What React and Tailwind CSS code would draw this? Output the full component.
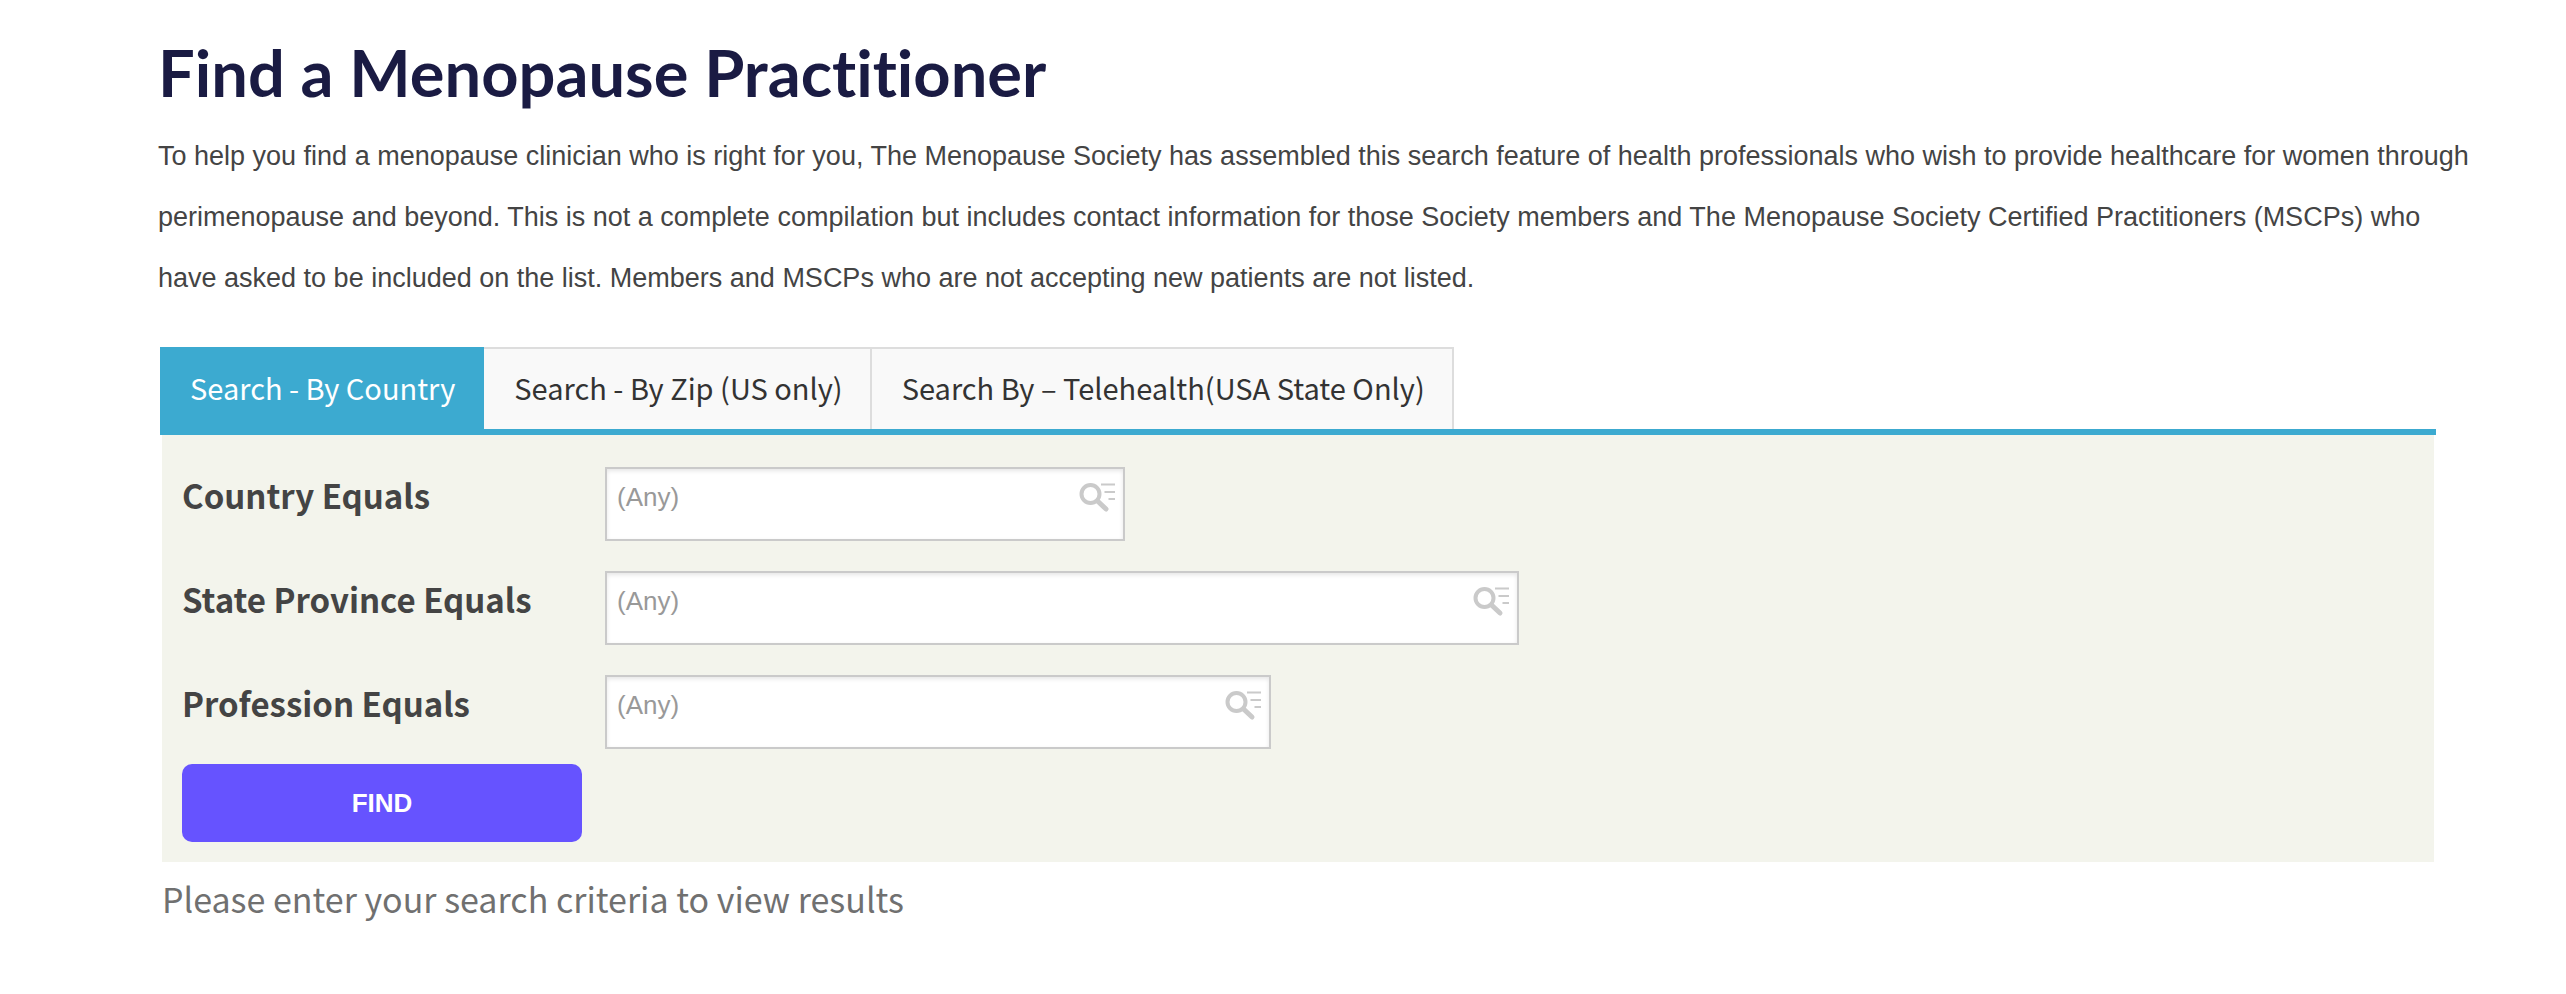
import React, { useState } from "react";

const tabs = [
  { id: "country", label: "Search - By Country" },
  { id: "zip", label: "Search - By Zip (US only)" },
  { id: "telehealth", label: "Search By – Telehealth(USA State Only)" },
];

const fields = [
  { id: "country-name", label: "Country Equals", width: "w-[520px]" },
  { id: "state-province", label: "State Province Equals", width: "w-[914px]" },
  { id: "profession", label: "Profession Equals", width: "w-[666px]" },
];

function LookupIcon() {
  return (
    <svg width="36" height="30" viewBox="0 0 36 30" fill="none" stroke="#cacaca">
      <circle cx="11.5" cy="11" r="9" strokeWidth="4" />
      <path d="M18.5 18 L27 26" strokeWidth="5" strokeLinecap="round" />
      <path d="M22 1.5 H36 M25.5 9 H36 M29.5 16 H36" strokeWidth="2" />
    </svg>
  );
}

function LookupField({ id, label, width }) {
  return (
    <div className="flex h-[104px] items-start">
      <label
        htmlFor={id}
        className="w-[423px] shrink-0 pt-1 text-[33px] leading-[48px] font-bold text-[#444]"
      >
        {label}
      </label>
      <div className={`relative ${width}`}>
        <input
          id={id}
          type="text"
          placeholder="(Any)"
          className="block h-[74px] w-full border-2 border-[#cacaca] bg-white pr-14 pb-[14px] pl-[10px] font-['Liberation_Sans',sans-serif] text-[26px] text-[#444] shadow-[inset_0_2px_4px_rgba(0,0,0,0.1)] outline-none placeholder:text-[#999]"
        />
        <button type="button" aria-label={`Look up ${label}`} className="absolute top-4 right-[10px]">
          <LookupIcon />
        </button>
      </div>
    </div>
  );
}

export default function App() {
  const [active, setActive] = useState("country");

  return (
    <main className="bg-white pt-[38px] pr-[130px] pb-16 pl-40 font-['Noto_Sans_CJK_SC',sans-serif]">
      <h1 className="-ml-[2px] font-[Lato,sans-serif] text-[65px] leading-[68px] font-bold text-[#1a1b43] [font-variant-ligatures:none]">
        Find a Menopause Practitioner
      </h1>

      <p className="-mr-10 -ml-[2px] mt-5 font-['Liberation_Sans',sans-serif] text-[27px] leading-[61px] text-[#444]">
        To help you find a menopause clinician who is right for you, The Menopause Society has
        assembled this search feature of health professionals who wish to provide healthcare for
        women through perimenopause and beyond. This is not a complete compilation but includes
        contact information for those Society members and The Menopause Society Certified
        Practitioners (MSCPs) who have asked to be included on the list. Members and MSCPs who are
        not accepting new patients are not listed.
      </p>

      <div role="tablist" className="mt-[38px] flex border-b-6 border-[#3caad0]">
        {tabs.map((tab) => (
          <button
            key={tab.id}
            type="button"
            role="tab"
            aria-selected={active === tab.id}
            onClick={() => setActive(tab.id)}
            className={`h-[82px] border-t-2 border-r-2 pr-[27px] pb-1 pl-[30px] text-[29px] leading-[40px] ${
              active === tab.id
                ? "border-[#3caad0] bg-[#3caad0] text-white"
                : "border-[#ddd] bg-[#f9f9f9] text-[#333]"
            }`}
          >
            {tab.label}
          </button>
        ))}
      </div>

      <form
        onSubmit={(e) => e.preventDefault()}
        className="mx-[2px] bg-[#f3f4ec] px-5 pt-8 pb-5"
      >
        {fields.map((field) => (
          <LookupField key={field.id} {...field} />
        ))}
        <button
          type="submit"
          className="-mt-[15px] block h-[78px] w-[400px] rounded-[10px] bg-[#6653ff] font-['Liberation_Sans',sans-serif] text-[26px] font-bold text-white"
        >
          FIND
        </button>
      </form>

      <p className="mx-[2px] mt-[11px] text-[34px] leading-[52px] text-[#707070]">
        Please enter your search criteria to view results
      </p>
    </main>
  );
}
